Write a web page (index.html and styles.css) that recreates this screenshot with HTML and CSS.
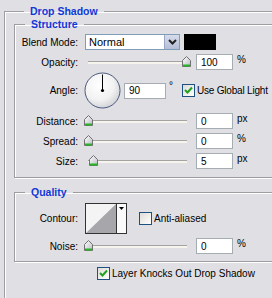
FILE: index.html
```html
<!DOCTYPE html>
<html lang="en">
<head>
    <meta charset="UTF-8">
    <title>Drop Shadow</title>
    <link rel="stylesheet" href="styles.css">
</head>
<body>
    <svg width="0" height="0" class="defs">
        <defs>
            <linearGradient id="thumbFill" x1="0" y1="0" x2="1" y2="1">
                <stop offset="0" stop-color="#ffffff"/>
                <stop offset="1" stop-color="#b9bcc4"/>
            </linearGradient>
            <radialGradient id="dialFill" cx="0.4" cy="0.35" r="0.7">
                <stop offset="0" stop-color="#ffffff"/>
                <stop offset="0.6" stop-color="#f2f2f2"/>
                <stop offset="1" stop-color="#cfd0d6"/>
            </radialGradient>
            <symbol id="thumb" viewBox="0 0 9 11">
                <polygon points="0.5,4.5 4.5,0.5 8.5,4.5 8.5,10.5 0.5,10.5" fill="url(#thumbFill)" stroke="#707070"/>
                <rect x="1" y="8.5" width="7" height="2" fill="#27b427"/>
            </symbol>
            <symbol id="check" viewBox="0 0 13 13">
                <polyline points="3,6 5.5,8.5 10,3.5" fill="none" stroke="#21a121" stroke-width="2"/>
            </symbol>
        </defs>
    </svg>

    <fieldset class="group outer">
        <legend>Drop Shadow</legend>

        <fieldset class="group structure">
            <legend>Structure</legend>
            <div class="row">
                <label class="lbl">Blend Mode:</label>
                <div class="select">
                    <span class="select_text">Normal</span>
                    <span class="select_btn">
                        <svg width="9" height="6" viewBox="0 0 9 6"><polyline points="1,1 4.5,4.5 8,1" fill="none" stroke="#222" stroke-width="2"/></svg>
                    </span>
                </div>
                <div class="swatch"></div>
            </div>
            <div class="row">
                <label class="lbl">Opacity:</label>
                <div class="slider"><div class="track"></div><svg class="thumb" style="left:98px"><use href="#thumb"/></svg></div>
                <input class="num" type="text" value="100">
                <span class="unit">%</span>
            </div>
            <div class="row angle">
                <label class="lbl">Angle:</label>
                <svg class="dial" width="37" height="37" viewBox="0 0 37 37">
                    <circle cx="18.5" cy="18.5" r="17.5" fill="url(#dialFill)" stroke="#4b5a7e"/>
                    <line x1="18.5" y1="18.5" x2="18.5" y2="2.5" stroke="#000"/>
                    <circle cx="18.5" cy="18.5" r="1.6" fill="#000"/>
                </svg>
                <input class="num deg" type="text" value="90">
                <span class="unit degsign">°</span>
                <span class="box checked"><svg width="13" height="13"><use href="#check"/></svg></span>
                <span class="chk_text tight">Use Global Light</span>
            </div>
            <div class="row">
                <label class="lbl">Distance:</label>
                <div class="slider"><div class="track"></div><svg class="thumb" style="left:0px"><use href="#thumb"/></svg></div>
                <input class="num" type="text" value="0">
                <span class="unit">px</span>
            </div>
            <div class="row">
                <label class="lbl">Spread:</label>
                <div class="slider"><div class="track"></div><svg class="thumb" style="left:0px"><use href="#thumb"/></svg></div>
                <input class="num" type="text" value="0">
                <span class="unit">%</span>
            </div>
            <div class="row">
                <label class="lbl">Size:</label>
                <div class="slider"><div class="track"></div><svg class="thumb" style="left:5px"><use href="#thumb"/></svg></div>
                <input class="num" type="text" value="5">
                <span class="unit">px</span>
            </div>
        </fieldset>

        <fieldset class="group quality">
            <legend>Quality</legend>
            <div class="row contour_row">
                <label class="lbl">Contour:</label>
                <div class="contour">
                    <svg class="curve" width="30" height="29" viewBox="0 0 30 29">
                        <rect width="30" height="29" fill="#f4f4f4"/>
                        <polygon points="0,29 30,0 30,29" fill="#a7a6ab"/>
                    </svg>
                    <span class="contour_btn">
                        <svg width="5" height="3" viewBox="0 0 5 3"><polygon points="0,0 5,0 2.5,3" fill="#000"/></svg>
                    </span>
                </div>
                <span class="box aa"></span>
                <span class="chk_text">Anti-aliased</span>
            </div>
            <div class="row">
                <label class="lbl">Noise:</label>
                <div class="slider"><div class="track"></div><svg class="thumb" style="left:0px"><use href="#thumb"/></svg></div>
                <input class="num" type="text" value="0">
                <span class="unit">%</span>
            </div>
        </fieldset>

        <div class="knock">
            <span class="box checked"><svg width="13" height="13"><use href="#check"/></svg></span>
            <span class="chk_text">Layer Knocks Out Drop Shadow</span>
        </div>
    </fieldset>
</body>
</html>
```

FILE: styles.css
```css
body{margin: 0; padding-top: 5px; width: 272px; height: 298px; overflow: hidden;
 background-color: #e0dfe3; color: #000; font: 10px "Liberation Sans", Arial, sans-serif;}
.defs{position: absolute;}

.group{margin: 0; padding: 0; min-width: 0; border: 1px solid #9d9da2;
 box-shadow: inset 1px 1px 0 #fff, 1px 1px 0 #fff;}
.group legend{margin-left: 10px; padding: 0 6px; font-size: 10.5px; line-height: 12px;
 font-weight: bold; color: #1038d8;}

.outer{margin-left: 4px; width: 300px; padding: 0 0 60px 9px;}
.structure{width: 300px; margin-top: 1px; padding: 0 0 8px 0;}
.quality{width: 300px; margin-top: 8px; padding: 1px 0 7px 0;}

.row{display: flex; align-items: center; height: 16px; margin-top: 4px;}
.lbl{width: 63px; margin-right: 6px; text-align: right;}

.select{display: flex; width: 95px; height: 16px; margin-left: 1px; box-sizing: border-box;
 border: 1px solid #7f9db9; background: #fff;}
.select_text{flex: 1; padding-left: 3px; line-height: 14px; font-size: 11px;}
.select_btn{display: flex; align-items: center; justify-content: center; width: 14px;
 background: linear-gradient(#d6dcec, #b4bed6); border-left: 1px solid #9aa7c4;}
.swatch{width: 32px; height: 16px; margin-left: 4px; background: #000;}

.slider{position: relative; display: flex; align-items: center; width: 106px; height: 16px;}
.track{flex: 1; margin: 0 3px 0 4px; height: 2px; border-top: 1px solid #a4a4a4; background: #f6f4ec;}
.thumb{position: absolute; top: 2px; width: 9px; height: 11px;}

.num{width: 37px; height: 16px; margin: 0 0 0 6px; padding: 0 0 0 4px; box-sizing: border-box;
 border: 1px solid #a5acb2; background: #fff; font: 10px "Liberation Sans", Arial, sans-serif;}
.unit{align-self: flex-start; margin-left: 4px; line-height: 12px;}

.angle{height: 37px; margin-top: 2px;}
.dial{flex: none;}
.num.deg{width: 42px; margin-left: 3px;}
.degsign{margin-left: 3px; margin-top: 8px;}
.box{display: inline-block; width: 13px; height: 13px; box-sizing: border-box; flex: none;
 border: 1px solid #1c5180; background: linear-gradient(135deg, #dcdcd7, #fff);}
.box svg{display: block; margin: -1px;}
.angle .box{margin-left: 9px;}
.chk_text{margin-left: 2px; white-space: nowrap;}
.chk_text.tight{letter-spacing: -0.2px;}

.contour_row{height: 31px;}
.contour{display: flex; width: 42px; height: 31px; margin-left: 1px; box-sizing: border-box;
 border: 1px solid #333; background: #fff;}
.curve{display: block; border-right: 1px solid #333;}
.contour_btn{flex: 1; display: flex; justify-content: center; padding-top: 3px; background: #fafafa;}
.aa{margin-left: 12px;}

.knock{display: flex; align-items: center; margin: 5px 0 0 83px;}
```
